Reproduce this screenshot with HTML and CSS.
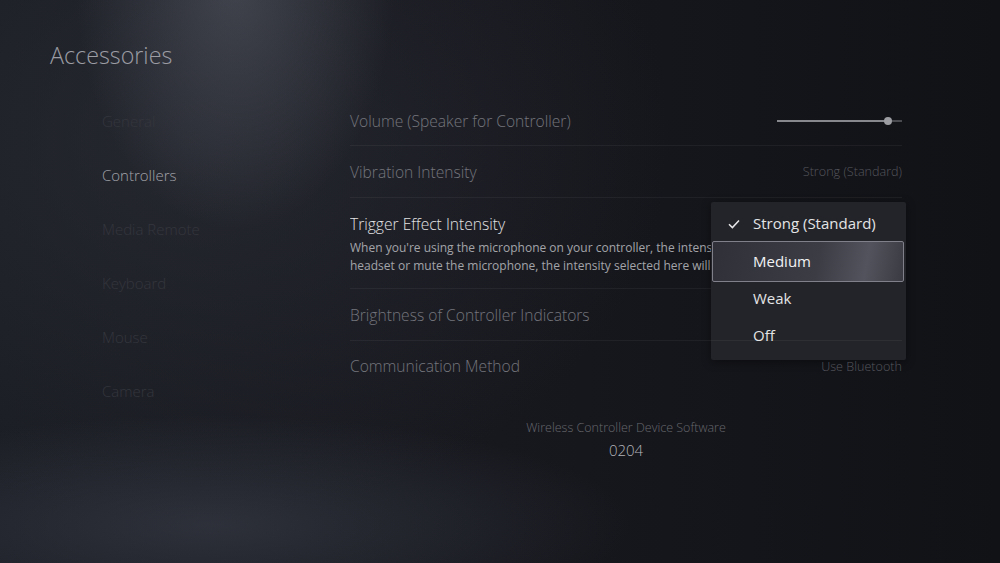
FILE: index.html
```html
<!DOCTYPE html>
<html lang="en">
<head>
    <meta charset="UTF-8">
    <meta name="viewport" content="width=device-width, initial-scale=1.0">
    <title>Accessories - Controllers</title>
    <link rel="stylesheet" href="styles.css">
</head>
<body>
    <div class="page">
        <h1 class="page-title">Accessories</h1>

        <div class="layout">
            <!-- Left menu -->
            <ul class="sidebar">
                <li class="side-item">General</li>
                <li class="side-item active">Controllers</li>
                <li class="side-item">Media Remote</li>
                <li class="side-item">Keyboard</li>
                <li class="side-item">Mouse</li>
                <li class="side-item">Camera</li>
            </ul>

            <!-- Settings list -->
            <div class="settings">
                <div class="row">
                    <span class="row-label">Volume (Speaker for Controller)</span>
                    <div class="slider">
                        <div class="slider-fill" style="width: 89%"></div>
                        <div class="slider-knob" style="left: 89%"></div>
                    </div>
                </div>
                <div class="row">
                    <span class="row-label">Vibration Intensity</span>
                    <span class="row-value">Strong (Standard)</span>
                </div>
                <div class="row row-open">
                    <div class="row-text">
                        <span class="row-label">Trigger Effect Intensity</span>
                        <p class="row-desc">When you're using the microphone on your controller, the intensity of the trigger effect is reduced. When you use a headset or mute the microphone, the intensity selected here will be applied.</p>
                    </div>

                    <!-- Open dropdown -->
                    <ul class="dropdown">
                        <li class="option">
                            <svg class="check" width="12" height="10" viewBox="0 0 12 10">
                                <path d="M1 5.2 L4.4 8.6 L11 1.4" fill="none" stroke="#e6e6e8" stroke-width="1.5"/>
                            </svg>
                            Strong (Standard)
                        </li>
                        <li class="option focused">Medium</li>
                        <li class="option">Weak</li>
                        <li class="option">Off</li>
                    </ul>
                </div>
                <div class="row">
                    <span class="row-label">Brightness of Controller Indicators</span>
                </div>
                <div class="row last">
                    <span class="row-label">Communication Method</span>
                    <span class="row-value">Use Bluetooth</span>
                </div>

                <div class="device-info">
                    <div class="device-label">Wireless Controller Device Software</div>
                    <div class="device-version">0204</div>
                </div>
            </div>
        </div>
    </div>
</body>
</html>
```

FILE: styles.css
```css
html, body {
    margin: 0;
    height: 100%;
}
body {
    font-family: 'Open Sans', 'Noto Sans', sans-serif;
    font-weight: 300;
    color: #9a9ba2;
    overflow: hidden;
    background:
        radial-gradient(ellipse 160px 250px at 235px -20px, rgba(150, 155, 170, 0.28), rgba(150, 155, 170, 0) 100%),
        radial-gradient(ellipse 420px 110px at 210px 525px, rgba(70, 75, 88, 0.45), rgba(70, 75, 88, 0) 100%),
        radial-gradient(ellipse 480px 380px at 190px 140px, rgba(45, 47, 56, 0.6), rgba(45, 47, 56, 0) 100%),
        linear-gradient(to right, #1b1d24 0%, #17181e 50%, #111216 100%);
}
.page {
    padding: 0 98px 0 50px;
}
.page-title {
    margin: 0;
    padding-top: 40px;
    font-size: 23.3px;
    line-height: 30px;
    font-weight: 300;
    color: #9c9da4;
}
.layout {
    display: flex;
    margin-top: 24px;
}
.sidebar {
    list-style: none;
    margin: 0;
    padding: 0 0 0 52px;
    width: 248px;
}
.side-item {
    height: 54px;
    line-height: 54px;
    font-size: 15px;
    color: #34363d;
}
.side-item.active {
    color: #a2a3aa;
}
.settings {
    flex: 1;
}
.row {
    position: relative;
    display: flex;
    justify-content: space-between;
    align-items: center;
    height: 51px;
    border-bottom: 1px solid rgba(255, 255, 255, 0.05);
}
.row:first-child {
    padding-top: 3px;
    height: 48px;
}
.row.last {
    border-bottom: none;
    height: 50px;
}
.row-label {
    font-size: 15.6px;
    color: #74757c;
}
.row-value {
    font-size: 12.6px;
    color: #55565d;
}
.row-open {
    height: 90px;
    align-items: flex-start;
}
.row-text {
    padding-top: 15px;
    width: 361px;
    overflow: hidden;
}
.row-open .row-label {
    display: block;
    color: #e2e2e4;
    line-height: 22px;
}
.row-desc {
    margin: 4px 0 0;
    width: 665px;
    font-size: 12px;
    font-weight: 400;
    line-height: 18px;
    color: #a3a4a9;
}
.slider {
    position: relative;
    width: 125px;
    height: 2px;
    background: #4a4b51;
}
.slider-fill {
    height: 2px;
    background: #87888e;
}
.slider-knob {
    position: absolute;
    top: -3px;
    width: 8px;
    height: 8px;
    margin-left: -4px;
    border-radius: 50%;
    background: #9c9da2;
}
.dropdown {
    position: absolute;
    top: 4px;
    left: 361px;
    right: -4px;
    margin: 0;
    padding: 3px 0 6px;
    list-style: none;
    background: #232429;
    border-radius: 2px;
    box-shadow: 0 2px 10px rgba(0, 0, 0, 0.4);
}
.option {
    position: relative;
    height: 37px;
    line-height: 37px;
    padding-left: 42px;
    font-size: 15px;
    font-weight: 400;
    color: #e4e4e6;
}
.option .check {
    position: absolute;
    left: 17px;
    top: 14px;
}
.option.focused {
    margin: -1px 2px -2px 1px;
    padding-left: 40px;
    height: 39px;
    line-height: 39px;
    border: 1px solid #7f808a;
    border-radius: 2px;
    background: linear-gradient(100deg, #303138 0%, #3b3c44 55%, #52535c 80%, #3a3b42 100%);
    color: #f2f2f4;
}
.device-info {
    margin-top: 28px;
    text-align: center;
}
.device-label {
    font-size: 12.5px;
    color: #66676d;
}
.device-version {
    margin-top: 4px;
    font-size: 15px;
    color: #b3b4b8;
}
```
